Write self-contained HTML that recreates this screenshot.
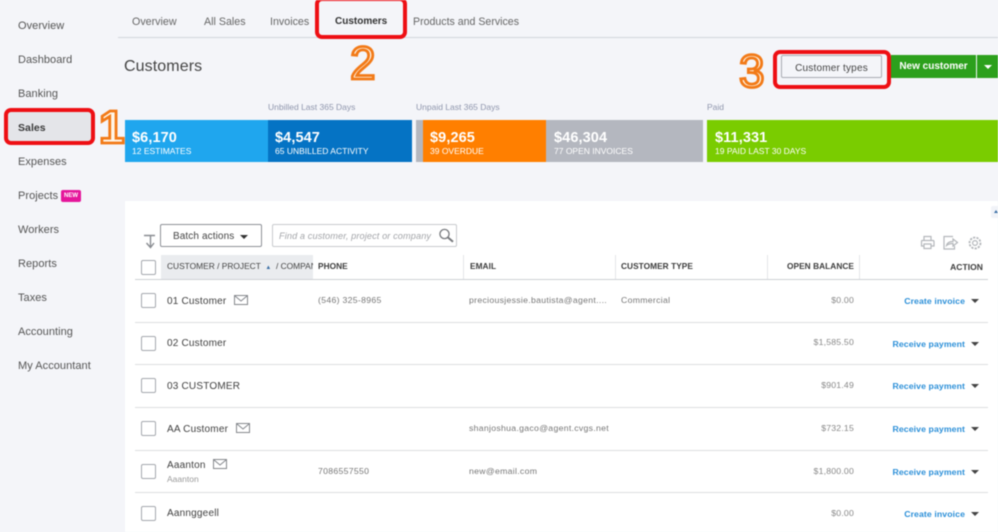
<!DOCTYPE html>
<html lang="en"><head><meta charset="utf-8"><title>Customers</title>
<style>
html,body{margin:0;padding:0;width:998px;height:532px;overflow:hidden;background:#f4f5f9}
#r{position:absolute;left:0;top:0;width:998px;height:532px;overflow:hidden;font-family:"Liberation Sans",sans-serif;color:#444;filter:blur(.45px)}
.t{position:absolute;white-space:nowrap;line-height:16px;font-size:11px;letter-spacing:0}
.b{position:absolute;box-sizing:border-box}
.n{color:#555;left:18px;letter-spacing:.05px}
.tab{top:14px;color:#666;font-size:10.700px}
.amt{font-weight:bold;font-size:14.500px;color:#fff;top:130px;letter-spacing:.1px}
.sub{font-size:8.500px;color:#fff;top:143px;letter-spacing:0}
.lbl{font-size:8.500px;color:#8f96ad;top:99px}
.th{font-weight:bold;font-size:8.300px;color:#3c3c3c;top:258px;letter-spacing:.05px}
.cb{position:absolute;left:141px;width:15px;height:15px;box-sizing:border-box;border:1px solid #a5a8ae;border-radius:2px;background:#fff}
.ln{position:absolute;left:135px;width:853px;height:1px;background:#dcdee1}
.name{left:167px;font-size:10px;color:#3f3f3f;letter-spacing:.2px}
.d{font-size:8.700px;color:#777;letter-spacing:.3px}
.bal{font-size:8.700px;color:#888;right:144px;letter-spacing:.2px}
.act{font-size:8.700px;font-weight:bold;color:#2b8fd8;right:33px;letter-spacing:.1px}
.car{position:absolute;width:0;height:0;border-left:4px solid transparent;border-right:4px solid transparent;border-top:4.500px solid #444}
.sep{position:absolute;top:255px;width:1px;height:24px;background:#e3e5e8}
</style></head><body><div id="r">

<!-- sidebar -->
<div class="b" style="left:4px;top:108px;width:91px;height:37px;background:#e4e5e9;border:4px solid #ee0f14;border-radius:7px"></div>
<div class="t n" style="top:18px">Overview</div>
<div class="t n" style="top:52px">Dashboard</div>
<div class="t n" style="top:86px">Banking</div>
<div class="t n" style="top:120px;font-weight:bold;color:#3a3a3a;font-size:10.500px">Sales</div>
<div class="t n" style="top:154px">Expenses</div>
<div class="t n" style="top:188px">Projects</div>
<div class="b" style="left:61px;top:190px;width:20px;height:12px;background:#e5169b;border-radius:2px;color:#fff;font-size:6px;font-weight:bold;text-align:center;line-height:12px">NEW</div>
<div class="t n" style="top:222px">Workers</div>
<div class="t n" style="top:256px">Reports</div>
<div class="t n" style="top:290px">Taxes</div>
<div class="t n" style="top:324px">Accounting</div>
<div class="t n" style="top:358px">My Accountant</div>

<!-- tabs -->
<div class="b" style="left:118px;top:37px;width:880px;height:1px;background:#d3d6db"></div>
<div class="t tab" style="left:132px">Overview</div>
<div class="t tab" style="left:204px">All Sales</div>
<div class="t tab" style="left:270px">Invoices</div>
<div class="t tab" style="left:335px;color:#333;font-weight:bold;font-size:10px">Customers</div>
<div class="t tab" style="left:413px;font-size:10.600px">Products and Services</div>
<div class="b" style="left:315px;top:-3px;width:92px;height:42px;border:4px solid #ee0f14;border-radius:7px"></div>

<!-- title and buttons -->
<div class="t" style="left:124px;top:58.500px;font-size:16px;color:#444;letter-spacing:.1px">Customers</div>
<div class="b" style="left:773px;top:50px;width:118px;height:39px;border:4px solid #ee0f14;border-radius:7px"></div>
<div class="b" style="left:781px;top:55px;width:101px;height:23px;border:1px solid #a9acb2;border-radius:2px"></div>
<div class="t" style="left:781px;top:61px;width:101px;text-align:center;font-size:10px;color:#444;letter-spacing:.2px">Customer types</div>
<div class="b" style="left:891px;top:55px;width:85px;height:23px;background:#2ca01c"></div>
<div class="b" style="left:977px;top:55px;width:21px;height:23px;background:#2ca01c"></div>
<div class="t" style="left:891px;top:59px;width:85px;text-align:center;font-size:10px;font-weight:bold;color:#fff;letter-spacing:0">New customer</div>
<div class="car" style="left:984px;top:65px;border-top-color:#fff"></div>

<!-- numbers -->
<svg style="position:absolute;left:0;top:0" width="998" height="532">
<g font-family="'Liberation Sans',sans-serif" font-size="46" fill="#fff6e8" stroke="#f27a18" stroke-width="2.800">
<text x="99" y="143" font-weight="bold">1</text>
<text x="350" y="79">2</text>
<text x="739" y="87">3</text>
</g></svg>

<!-- KPIs -->
<div class="t lbl" style="left:268px">Unbilled Last 365 Days</div>
<div class="t lbl" style="left:416px">Unpaid Last 365 Days</div>
<div class="t lbl" style="left:707px">Paid</div>
<div class="b" style="left:125px;top:120px;width:143px;height:42px;background:#1fa6ee"></div>
<div class="b" style="left:268px;top:120px;width:144px;height:42px;background:#0573c4"></div>
<div class="b" style="left:416px;top:120px;width:7px;height:42px;background:#b4b7bf"></div>
<div class="b" style="left:423px;top:120px;width:123px;height:42px;background:#ff7f00"></div>
<div class="b" style="left:546px;top:120px;width:157px;height:42px;background:#b4b7bf"></div>
<div class="b" style="left:707px;top:120px;width:291px;height:42px;background:#7acc00"></div>
<div class="t amt" style="left:132px">$6,170</div><div class="t sub" style="left:132px">12 ESTIMATES</div>
<div class="t amt" style="left:275px">$4,547</div><div class="t sub" style="left:275px">65 UNBILLED ACTIVITY</div>
<div class="t amt" style="left:430px">$9,265</div><div class="t sub" style="left:430px">39 OVERDUE</div>
<div class="t amt" style="left:554px">$46,304</div><div class="t sub" style="left:554px">77 OPEN INVOICES</div>
<div class="t amt" style="left:715px">$11,331</div><div class="t sub" style="left:715px">19 PAID LAST 30 DAYS</div>

<!-- panel -->
<div class="b" style="left:125px;top:201px;width:873px;height:331px;background:#fff"></div>
<div class="b" style="left:991px;top:206px;width:7px;height:12px;background:#f1f3f8;border-radius:2px 0 0 2px"></div>
<div class="b" style="left:994px;top:210px;width:0;height:0;border-left:2.500px solid transparent;border-right:2.500px solid transparent;border-bottom:3px solid #3a6ea5"></div>

<!-- toolbar -->
<svg style="position:absolute;left:143px;top:233px" width="14" height="16" fill="none" stroke="#8a8d92" stroke-width="1.400"><path d="M1 2.500H12M7.500 2.500V14M3.500 10L7.500 14.500L11 10"/></svg>
<div class="b" style="left:160px;top:224px;width:102px;height:23px;border:1px solid #8e9197;border-radius:2px;background:#fff"></div>
<div class="t" style="left:173px;top:228.500px;font-size:10px;color:#444;letter-spacing:.1px">Batch actions</div>
<div class="car" style="left:240px;top:235px;border-top-color:#333"></div>
<div class="b" style="left:272px;top:224px;width:185px;height:23px;border:1px solid #c8cace;border-radius:2px;background:#fff"></div>
<div class="t" style="left:279px;top:228px;font-size:9.200px;font-style:italic;color:#a3a5a9;letter-spacing:.1px">Find a customer, project or company</div>
<svg style="position:absolute;left:438px;top:228px" width="17" height="15" fill="none" stroke="#77797d" stroke-width="1.300"><circle cx="6.500" cy="6" r="4.600"/><path d="M10 9.500L15 13.800" stroke-width="2"/></svg>
<svg style="position:absolute;left:920px;top:235px" width="66" height="17" fill="none" stroke="#b4b7bb" stroke-width="1.200">
<path d="M4 5V1.500H11V5M2 5.500H13Q14 5.500 14 7V11H11M4 11H1.500V7Q1.500 5.500 2 5.500M4 9H11V13.500H4Z"/>
<path d="M33 1.500H24V14H34.500V11M26.500 10.500Q27.500 6.500 33 6.500V4L37.500 7.500L33 11V8.500Q29 8.500 26.500 10.500Z"/>
<circle cx="55" cy="8" r="2.400"/><circle cx="55" cy="8" r="5.500" stroke-dasharray="2.200 1.200" stroke-width="1.800"/>
</svg>

<!-- header -->
<div class="cb" style="top:260px"></div>
<div class="b" style="left:161px;top:255px;width:152px;height:24px;background:#eaecef"></div>
<div class="t" style="left:167px;top:258px;width:146px;overflow:hidden;font-size:8.400px;color:#444">CUSTOMER / PROJECT &nbsp;<span style="font-size:6px;color:#3a6ea5">&#9650;</span>&nbsp; / COMPANY</div>
<div class="t th" style="left:318px">PHONE</div>
<div class="t th" style="left:470px">EMAIL</div>
<div class="t th" style="left:621px">CUSTOMER TYPE</div>
<div class="t th" style="right:144px">OPEN BALANCE</div>
<div class="t th" style="right:15px;top:259px;font-size:8.500px">ACTION</div>
<div class="sep" style="left:463px"></div><div class="sep" style="left:615px"></div><div class="sep" style="left:767px"></div><div class="sep" style="left:859px"></div>
<div class="ln" style="top:279px;background:#ced1d5"></div>
<div class="ln" style="top:322px"></div>
<div class="ln" style="top:364px"></div>
<div class="ln" style="top:407px"></div>
<div class="ln" style="top:450px"></div>
<div class="ln" style="top:492px"></div>

<!-- rows -->
<div class="cb" style="top:293px"></div>
<div class="t name" style="top:294px">01 Customer</div>
<svg style="position:absolute;left:234px;top:295px" width="15" height="11" fill="none" stroke="#85888d"><rect x=".5" y=".5" width="13" height="9"/><path d="M1 1L7 6L13 1"/></svg>
<div class="t d" style="left:318px;top:292px">(546) 325-8965</div>
<div class="t d" style="left:469px;top:292px">preciousjessie.bautista@agent....</div>
<div class="t d" style="left:621px;top:292px">Commercial</div>
<div class="t bal" style="top:292px">$0.00</div>
<div class="t act" style="top:293px">Create invoice</div>
<div class="car" style="left:971px;top:299px"></div>

<div class="cb" style="top:336px"></div>
<div class="t name" style="top:336px">02 Customer</div>
<div class="t bal" style="top:334px">$1,585.50</div>
<div class="t act" style="top:336px">Receive payment</div>
<div class="car" style="left:971px;top:342px"></div>

<div class="cb" style="top:378px"></div>
<div class="t name" style="top:379px">03 CUSTOMER</div>
<div class="t bal" style="top:377px">$901.49</div>
<div class="t act" style="top:378px">Receive payment</div>
<div class="car" style="left:971px;top:384px"></div>

<div class="cb" style="top:421px"></div>
<div class="t name" style="top:422px">AA Customer</div>
<svg style="position:absolute;left:236px;top:423px" width="15" height="11" fill="none" stroke="#85888d"><rect x=".5" y=".5" width="13" height="9"/><path d="M1 1L7 6L13 1"/></svg>
<div class="t d" style="left:469px;top:420px">shanjoshua.gaco@agent.cvgs.net</div>
<div class="t bal" style="top:420px">$732.15</div>
<div class="t act" style="top:421px">Receive payment</div>
<div class="car" style="left:971px;top:427px"></div>

<div class="cb" style="top:464px"></div>
<div class="t name" style="top:458px">Aaanton</div>
<div class="t" style="left:167px;top:471px;font-size:8.500px;color:#9a9a9a">Aaanton</div>
<svg style="position:absolute;left:213px;top:459px" width="15" height="11" fill="none" stroke="#85888d"><rect x=".5" y=".5" width="13" height="9"/><path d="M1 1L7 6L13 1"/></svg>
<div class="t d" style="left:318px;top:463px">7086557550</div>
<div class="t d" style="left:469px;top:463px">new@email.com</div>
<div class="t bal" style="top:463px">$1,800.00</div>
<div class="t act" style="top:464px">Receive payment</div>
<div class="car" style="left:971px;top:470px"></div>

<div class="cb" style="top:506px"></div>
<div class="t name" style="top:506px">Aannggeell</div>
<div class="t bal" style="top:505px">$0.00</div>
<div class="t act" style="top:506px">Create invoice</div>
<div class="car" style="left:971px;top:512px"></div>

</div></body></html>
